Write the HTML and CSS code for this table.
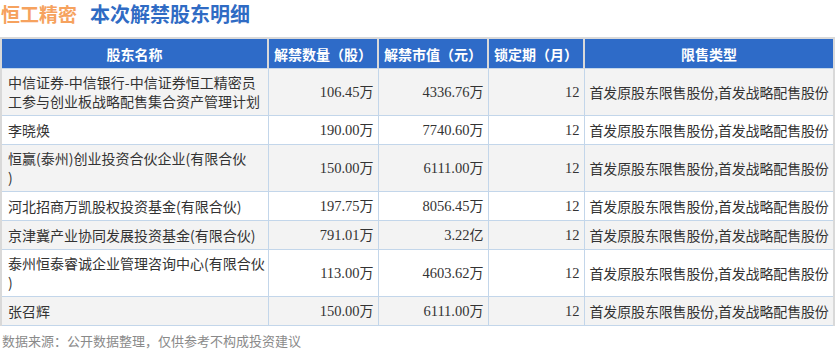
FILE: index.html
```html
<!DOCTYPE html>
<html lang="zh">
<head>
<meta charset="utf-8">
<link rel="stylesheet" href="styles.css">
</head>
<body>
<div class="page">
  <h1 class="title"><span class="company">恒工精密</span><span class="subject">本次解禁股东明细</span></h1>
  <table class="grid">
    <colgroup>
      <col class="c1"><col class="c2"><col class="c3"><col class="c4"><col class="c5">
    </colgroup>
    <thead>
      <tr><th>股东名称</th><th>解禁数量（股）</th><th>解禁市值（元）</th><th>锁定期（月）</th><th>限售类型</th></tr>
    </thead>
    <tbody>
      <tr><td class="name">中信证券-中信银行-中信证券恒工精密员工参与创业板战略配售集合资产管理计划</td><td class="num">106.45<span class="cn">万</span></td><td class="num">4336.76<span class="cn">万</span></td><td class="num">12</td><td class="type">首发原股东限售股份,首发战略配售股份</td></tr>
      <tr><td class="name">李晓焕</td><td class="num">190.00<span class="cn">万</span></td><td class="num">7740.60<span class="cn">万</span></td><td class="num">12</td><td class="type">首发原股东限售股份,首发战略配售股份</td></tr>
      <tr><td class="name">恒赢(泰州)创业投资合伙企业(有限合伙<br>)</td><td class="num">150.00<span class="cn">万</span></td><td class="num">6111.00<span class="cn">万</span></td><td class="num">12</td><td class="type">首发原股东限售股份,首发战略配售股份</td></tr>
      <tr><td class="name">河北招商万凯股权投资基金(有限合伙)</td><td class="num">197.75<span class="cn">万</span></td><td class="num">8056.45<span class="cn">万</span></td><td class="num">12</td><td class="type">首发原股东限售股份,首发战略配售股份</td></tr>
      <tr><td class="name">京津冀产业协同发展投资基金(有限合伙)</td><td class="num">791.01<span class="cn">万</span></td><td class="num">3.22<span class="cn">亿</span></td><td class="num">12</td><td class="type">首发原股东限售股份,首发战略配售股份</td></tr>
      <tr><td class="name">泰州恒泰睿诚企业管理咨询中心(有限合伙<br>)</td><td class="num">113.00<span class="cn">万</span></td><td class="num">4603.62<span class="cn">万</span></td><td class="num">12</td><td class="type">首发原股东限售股份,首发战略配售股份</td></tr>
      <tr><td class="name">张召辉</td><td class="num">150.00<span class="cn">万</span></td><td class="num">6111.00<span class="cn">万</span></td><td class="num">12</td><td class="type">首发原股东限售股份,首发战略配售股份</td></tr>
    </tbody>
  </table>
  <p class="source">数据来源：公开数据整理，仅供参考不构成投资建议</p>
</div>
</body>
</html>
```

FILE: styles.css
```css
html, body {
  margin: 0;
  padding: 0;
  background: #ffffff;
}

.page {
  width: 835px;
  font-family: "Noto Sans CJK SC", "Noto Sans", sans-serif;
  color: #333333;
}

.title {
  margin: 0;
  padding: 1px 0 0 1px;
  height: 37px;
  box-sizing: border-box;
  font-size: 19px;
  line-height: 26px;
  font-weight: bold;
  display: flex;
  gap: 13px;
}

.company { color: #f6a25e; }
.subject { color: #2f6bc4; font-size: 20px; }

.grid {
  width: 835px;
  border-collapse: collapse;
  table-layout: fixed;
  border: 2px solid #d9d9d9;
  border-bottom: 1px solid #c3d6ea;
}

.c1 { width: 267px; }
.c2 { width: 110px; }
.c3 { width: 110px; }
.c4 { width: 96px; }
.c5 { width: auto; }

.grid th {
  background: #2e6bc8;
  color: #ffffff;
  font-size: 14px;
  font-weight: bold;
  height: 29px;
  padding: 0 2px;
  text-align: center;
  white-space: nowrap;
  border-left: 2px solid #d9d9d9;
  border-right: 2px solid #d9d9d9;
}

.grid td {
  font-size: 14px;
  line-height: 19px;
  padding: 4px 2px 4px 6px;
  border: 1px solid #c3d6ea;
  vertical-align: middle;
}

.grid tbody tr:nth-child(odd) td { background: #f3f3f3; }
.grid tbody tr:nth-child(even) td { background: #ffffff; }

.grid td.name { padding-left: 6px; }

.grid td.num {
  text-align: right;
  font-family: "Liberation Serif", "Times New Roman", serif;
  font-size: 14.5px;
  padding-right: 4px;
}

.grid td.num .cn {
  font-family: "Noto Sans CJK SC", sans-serif;
  font-size: 14px;
}

.grid td.type {
  padding-left: 5px;
  white-space: nowrap;
  letter-spacing: -0.15px;
}

.source {
  margin: 0;
  padding: 6px 0 0 2px;
  font-size: 13px;
  line-height: 18px;
  color: #8a8a8a;
}
```
